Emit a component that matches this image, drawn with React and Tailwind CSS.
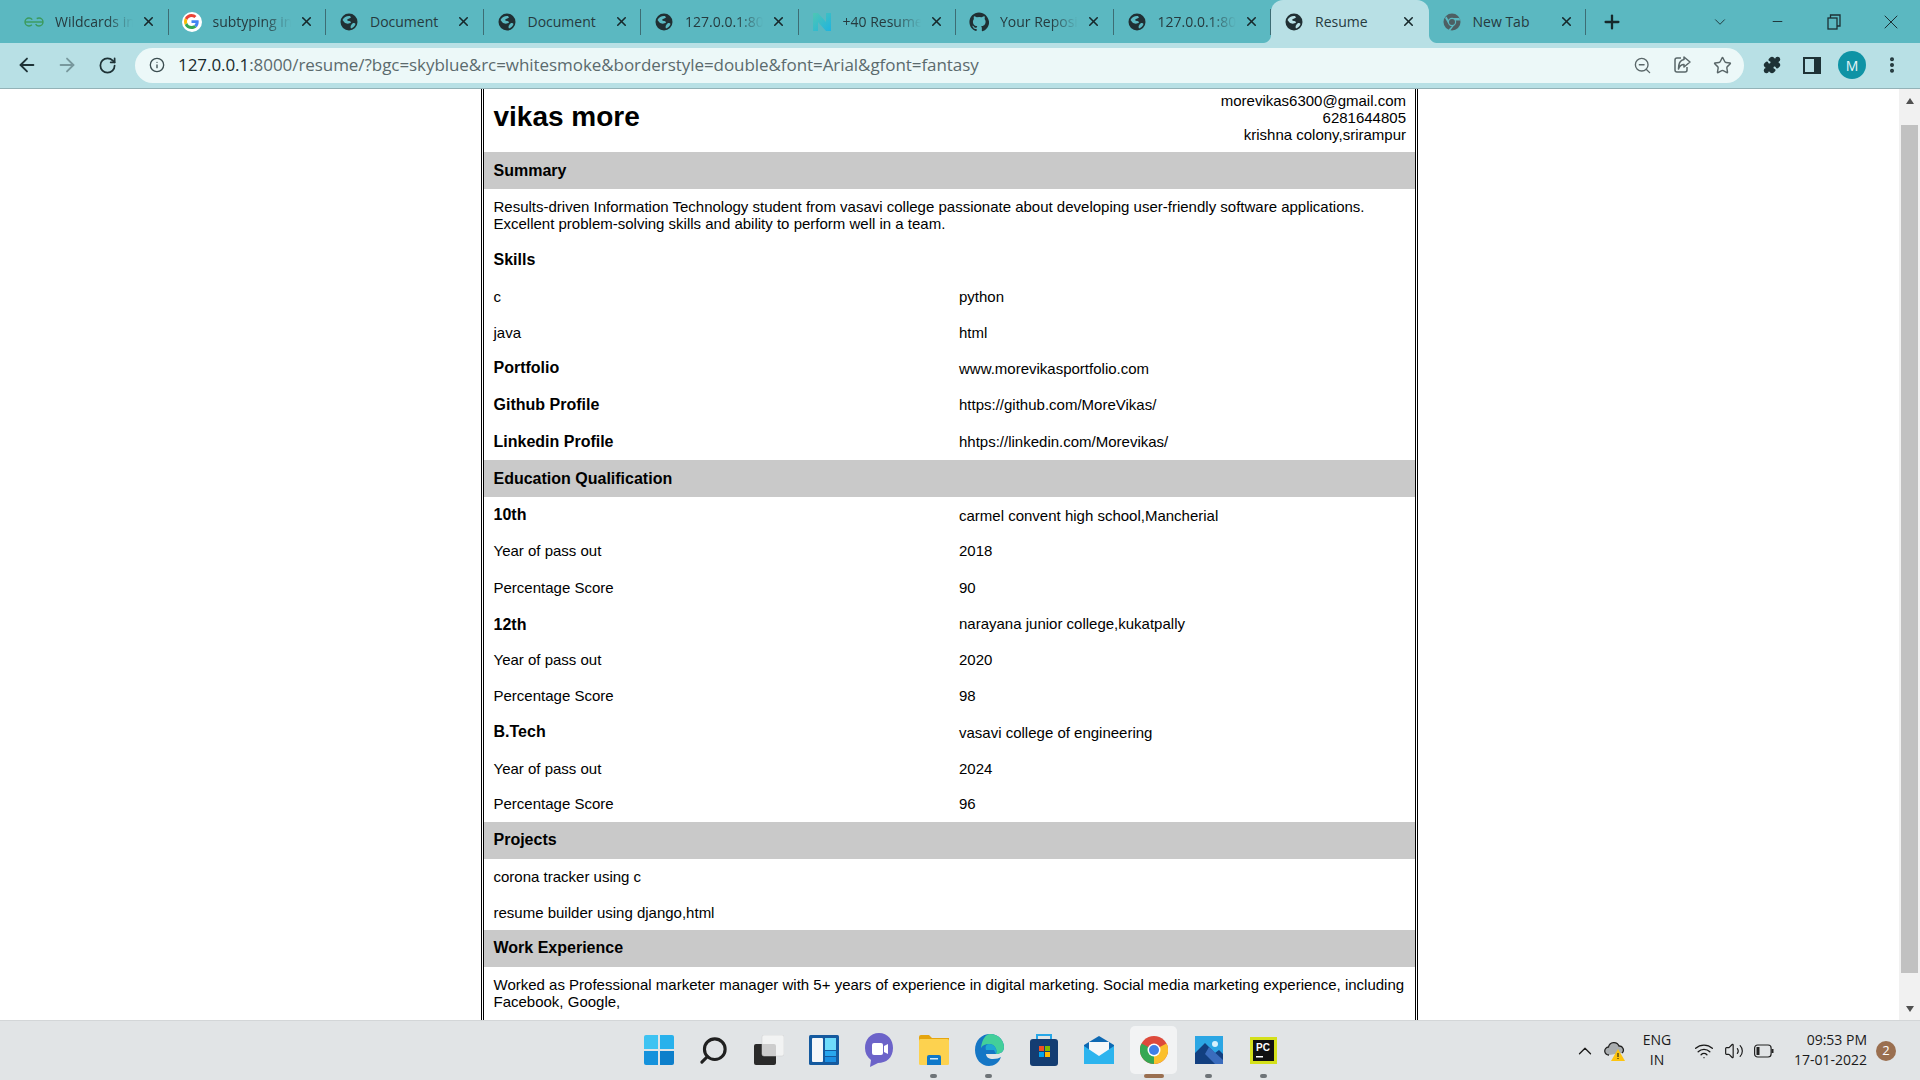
import React from 'react';
import { ArrowLeft, ArrowRight, RotateCw, Info, ZoomOut, Star, Puzzle, X, Plus, EllipsisVertical, ChevronDown, ChevronUp, Minus, Wifi, Volume2, Search } from 'lucide-react';

const GlobeIcon = ({ hole = '#5bb8c1' }) => (
  <svg width="18" height="18" viewBox="0 0 18 18" className="shrink-0">
    <circle cx="9" cy="9" r="8.500" fill="#202f33" />
    <path d="M2.500 7 C4 4 7 2.500 10 3 L11 4.500 C9.500 6 7.500 5.500 7 7 C8 8.500 11 7.500 11 9.500 C9.500 11 6 11 4.500 9.500 Z" fill={hole} />
    <path d="M13 10 C14.500 10 15.500 10.500 15.500 11 C14.800 13 13.200 14.800 11 15.500 C10 14 10.500 12 13 10 Z" fill={hole} />
  </svg>
);

const GoogleIcon = () => (
  <span className="w-[20px] h-[20px] rounded-full bg-white flex items-center justify-center shrink-0">
    <svg width="15" height="15" viewBox="0 0 48 48">
      <path fill="#EA4335" d="M24 9.500c3.500 0 6.700 1.300 9.100 3.500l6.800-6.800C35.800 2.400 30.300 0 24 0 14.600 0 6.500 5.400 2.600 13.200l7.900 6.100C12.400 13.700 17.700 9.500 24 9.500z" />
      <path fill="#4285F4" d="M47 24.500c0-1.600-.2-3.100-.4-4.500H24v9h13c-.6 3-2.300 5.500-4.800 7.200l7.700 6c4.500-4.200 7.100-10.300 7.100-17.700z" />
      <path fill="#FBBC05" d="M10.500 28.700c-.5-1.500-.8-3-.8-4.700s.3-3.200.8-4.700l-7.900-6.100C.9 16.500 0 20.100 0 24s.9 7.500 2.600 10.800l7.900-6.100z" />
      <path fill="#34A853" d="M24 48c6.500 0 11.900-2.100 15.900-5.800l-7.700-6c-2.200 1.400-4.900 2.300-8.200 2.300-6.300 0-11.600-4.200-13.500-9.800l-7.900 6.100C6.500 42.600 14.600 48 24 48z" />
    </svg>
  </span>
);

const GfgIcon = () => (
  <svg width="20" height="10" viewBox="0 0 20 10" className="shrink-0" fill="none" stroke="#3b9a5c" strokeWidth="1.400">
    <circle cx="5" cy="5" r="4" strokeDasharray="19 6" strokeDashoffset="-3" />
    <circle cx="15" cy="5" r="4" strokeDasharray="19 6" strokeDashoffset="9" />
    <path d="M1 5 H19" />
  </svg>
);

const NIcon = () => (
  <svg width="20" height="18" viewBox="0 0 20 18" className="shrink-0">
    <defs>
      <linearGradient id="n-grad" x1="0" y1="0" x2="1" y2="1">
        <stop offset="0" stopColor="#4fc6b4" />
        <stop offset="1" stopColor="#1eb4e0" />
      </linearGradient>
    </defs>
    <path d="M1 0 H6 L14 9 V0 H19 V18 H14 L6 9 V18 H1 Z" fill="url(#n-grad)" />
  </svg>
);

const GithubIcon = () => (
  <svg width="20" height="20" viewBox="0 0 24 24" fill="#202f33" className="shrink-0">
    <path d="M12 .5C5.600.5.500 5.600.500 12c0 5.100 3.300 9.400 7.900 10.900.6.100.8-.3.800-.6v-2c-3.200.7-3.900-1.400-3.900-1.400-.5-1.300-1.300-1.700-1.300-1.700-1-.7.100-.7.100-.7 1.200.1 1.800 1.200 1.800 1.200 1 1.800 2.700 1.300 3.400 1 .1-.8.4-1.300.7-1.600-2.600-.3-5.300-1.300-5.300-5.700 0-1.300.5-2.300 1.200-3.100-.1-.3-.5-1.500.1-3.200 0 0 1-.3 3.300 1.200a11.500 11.500 0 0 1 6 0c2.300-1.500 3.300-1.200 3.300-1.200.7 1.700.2 2.900.1 3.200.8.800 1.200 1.900 1.200 3.100 0 4.400-2.700 5.400-5.300 5.700.4.400.8 1.100.8 2.200v3.200c0 .3.200.7.800.6 4.600-1.500 7.900-5.800 7.900-10.900C23.500 5.600 18.400.5 12 .5z" />
  </svg>
);

const NewTabIcon = () => (
  <svg width="18" height="18" viewBox="0 0 18 18" className="shrink-0">
    <circle cx="9" cy="9" r="8.500" fill="#4d5f63" />
    <path d="M9 5 H16.500 A8.500 8.500 0 0 1 17 7.500 H12 Z M5.500 11 L2 5 A8.500 8.500 0 0 1 3.500 3.500 L6 8 Z M11 12.500 L7.500 17.300 A8.500 8.500 0 0 1 5.500 16.700 L9.500 12.500 Z" fill="#5bb8c1" />
    <circle cx="9" cy="9" r="4.200" fill="#5bb8c1" />
    <circle cx="9" cy="9" r="3" fill="#4d5f63" />
  </svg>
);

const tabs = [
  { title: 'Wildcards in', icon: <GfgIcon />, fade: true },
  { title: 'subtyping in', icon: <GoogleIcon />, fade: true },
  { title: 'Document', icon: <GlobeIcon /> },
  { title: 'Document', icon: <GlobeIcon /> },
  { title: '127.0.0.1:8000', icon: <GlobeIcon />, fade: true },
  { title: '+40 Resume', icon: <NIcon />, fade: true },
  { title: 'Your Reposit', icon: <GithubIcon />, fade: true },
  { title: '127.0.0.1:8000', icon: <GlobeIcon />, fade: true },
  { title: 'Resume', icon: <GlobeIcon hole="#b8e0e5" />, active: true, noSep: true },
  { title: 'New Tab', icon: <NewTabIcon /> },
];

const Tab = ({ tab }) => (
  <div className={`relative w-[157.500px] h-[43px] shrink-0 flex items-center ${tab.active ? 'bg-[#b8e0e5] rounded-t-[12px]' : ''}`}>
    {tab.active && <span className="absolute bottom-0 -left-[8px] w-[8px] h-[8px] [background:radial-gradient(circle_at_0_0,#5bb8c1_7.500px,#b8e0e5_8.500px)]" />}
    {tab.active && <span className="absolute bottom-0 -right-[8px] w-[8px] h-[8px] [background:radial-gradient(circle_at_100%_0,#5bb8c1_7.500px,#b8e0e5_8.500px)]" />}
    <span className="w-[46px] shrink-0 flex justify-center">{tab.icon}</span>
    <span className={`w-[78px] -ml-[2px] whitespace-nowrap overflow-hidden text-[14px] text-[#263a3e] -mt-[1px] ${tab.fade ? '[mask-image:linear-gradient(to_right,black_65%,transparent)]' : ''}`}>{tab.title}</span>
    <X size={15} strokeWidth={2.500} className="ml-[8px] text-[#17282b]" />
    {!tab.active && !tab.noSep && <span className="ml-auto w-px h-[26px] bg-[#3d6d74]" />}
  </div>
);

const TabStrip = () => (
  <div className="h-[43px] bg-[#5bb8c1] flex pl-[11px]">
    {tabs.map((tab, i) => <Tab key={i} tab={tab} />)}
    <span className="w-[51px] flex justify-center items-center"><Plus size={22} strokeWidth={2.500} className="text-[#17282b]" /></span>
    <span className="ml-[55px] w-[56px] flex justify-center items-center"><ChevronDown size={18} strokeWidth={1.200} className="text-[#1c3034]" /></span>
    <span className="ml-[1px] w-[56px] flex justify-center items-center"><Minus size={15} strokeWidth={1.500} className="text-[#1c3034]" /></span>
    <span className="w-[57px] flex justify-center items-center">
      <svg width="14" height="16" viewBox="0 0 14 16" fill="none" stroke="#1c3034" strokeWidth="1.300"><rect x="1" y="4" width="9" height="11" /><path d="M3.500 4 V1 H13 V12 H10" /></svg>
    </span>
    <span className="w-[58px] flex justify-center items-center"><X size={24} strokeWidth={1} className="text-[#1c3034]" /></span>
  </div>
);

const ToolbarBtn = ({ children, className = '' }) => (
  <span className={`flex justify-center items-center shrink-0 ${className}`}>{children}</span>
);

const Toolbar = () => (
  <div className="h-[46px] bg-[#b8e0e5] border-b border-[#93b2b7] flex items-center pb-[1px] pl-[7px]">
    <ToolbarBtn className="w-[40px]"><ArrowLeft size={22} strokeWidth={2} className="text-[#1e3236]" /></ToolbarBtn>
    <ToolbarBtn className="w-[40px]"><ArrowRight size={22} strokeWidth={2} className="text-[#78989d]" /></ToolbarBtn>
    <ToolbarBtn className="w-[40px]"><RotateCw size={19} strokeWidth={2.200} className="text-[#1e3236]" /></ToolbarBtn>
    <div className="ml-[8px] w-[1609px] h-[35px] rounded-full bg-[#ecf8f8] flex items-center">
      <ToolbarBtn className="w-[44px]"><Info size={16} strokeWidth={2} className="text-[#3b4d50]" /></ToolbarBtn>
      <span className="text-[17px] tracking-[-0.060px] -ml-[1px] whitespace-nowrap text-[#5b6a6d]"><span className="text-[#182a2d]">127.0.0.1</span>:8000/resume/?bgc=skyblue&rc=whitesmoke&borderstyle=double&font=Arial&gfont=fantasy</span>
      <ToolbarBtn className="ml-auto w-[40px]"><ZoomOut size={19} strokeWidth={1.700} className="text-[#5a6769]" /></ToolbarBtn>
      <ToolbarBtn className="w-[40px]">
        <svg width="20" height="20" viewBox="0 0 20 20" fill="none" stroke="#5a6769" strokeWidth="1.500" strokeLinejoin="round"><path d="M9 3 H5 Q3 3 3 5 V15 Q3 17 5 17 H13 Q15 17 15 15 V12" /><path d="M12 2 L18 7 L12 12 V9.500 C9.500 9.500 7.500 11 6.500 14 C6.500 9 8.500 5 12 4.500 Z" /></svg>
      </ToolbarBtn>
      <ToolbarBtn className="w-[40px] mr-[2px]"><Star size={19} strokeWidth={1.800} className="text-[#5a6769]" /></ToolbarBtn>
    </div>
    <ToolbarBtn className="ml-[8px] w-[40px]"><Puzzle size={18} fill="#1e3236" className="text-[#1e3236]" /></ToolbarBtn>
    <ToolbarBtn className="w-[40px]">
      <svg width="18" height="17" viewBox="0 0 18 17"><path d="M0 0 H18 V17 H0 Z M2 2 V15 H11 V2 Z" fill="#1e3236" fillRule="evenodd" /></svg>
    </ToolbarBtn>
    <ToolbarBtn className="w-[40px]"><span className="w-[28px] h-[28px] rounded-full bg-[#0f93a5] text-[#e8f6f8] text-[14px] flex items-center justify-center">M</span></ToolbarBtn>
    <ToolbarBtn className="w-[40px]"><EllipsisVertical size={20} strokeWidth={2.800} className="text-[#1e3236]" /></ToolbarBtn>
  </div>
);

const Band = ({ children, up }) => (
  <div className={`h-[37px] bg-[#c9c9c9] flex items-center pl-[9.500px] font-bold text-[16px] ${up ? 'pb-[2px]' : ''}`}>{children}</div>
);

const Row = ({ left, right, bold, tall, short, lift }) => (
  <div className={`${tall ? 'h-[37px]' : short ? 'h-[35px]' : 'h-[36px]'} grid grid-cols-[465.500px_1fr] items-center pl-[9.500px] ${lift ? 'pb-[2px]' : ''}`}>
    <span className={bold ? `font-bold text-[16px] ${tall ? '' : '-mt-[2px]'} ${lift ? 'mt-[2px]' : ''}` : ''}>{left}</span>
    <span>{right}</span>
  </div>
);

const Resume = () => (
  <div className="mx-auto w-[937px] h-full border-x-[3px] border-double border-black text-black text-[15px] leading-[17px] font-['Liberation_Sans',Arial,sans-serif] overflow-hidden">
    <div className="h-[63px] flex justify-between pl-[9.500px] pr-[9px] pt-[3px]">
      <h1 className="font-bold text-[28px] leading-[49px]">vikas more</h1>
      <div className="text-right">
        <div>morevikas6300@gmail.com</div>
        <div>6281644805</div>
        <div>krishna colony,srirampur</div>
      </div>
    </div>
    <Band>Summary</Band>
    <div className="pl-[9.500px] pr-[9px] pt-[9px] h-[52px]">
      Results-driven Information Technology student from vasavi college passionate about developing user-friendly software applications. Excellent problem-solving skills and ability to perform well in a team.
    </div>
    <Row left="Skills" bold tall />
    <Row left="c" right="python" />
    <Row left="java" right="html" />
    <Row left="Portfolio" right="www.morevikasportfolio.com" bold />
    <Row left="Github Profile" right="https://github.com/MoreVikas/" bold tall />
    <Row left="Linkedin Profile" right="hhtps://linkedin.com/Morevikas/" bold tall />
    <Band>Education Qualification</Band>
    <Row left="10th" right="carmel convent high school,Mancherial" bold />
    <Row left="Year of pass out" right="2018" tall lift />
    <Row left="Percentage Score" right="90" lift />
    <Row left="12th" right="narayana junior college,kukatpally" bold lift />
    <Row left="Year of pass out" right="2020" lift />
    <Row left="Percentage Score" right="98" lift />
    <Row left="B.Tech" right="vasavi college of engineering" bold />
    <Row left="Year of pass out" right="2024" />
    <Row left="Percentage Score" right="96" lift />
    <Band up>Projects</Band>
    <Row left="corona tracker using c" lift />
    <Row left="resume builder using django,html" short />
    <Band up>Work Experience</Band>
    <div className="pl-[9.500px] pr-[9px] pt-[9px]">
      Worked as Professional marketer manager with 5+ years of experience in digital marketing. Social media marketing experience, including Facebook, Google,
    </div>
  </div>
);

const Scrollbar = () => (
  <div className="w-[21px] shrink-0 bg-[#f1f1f1] flex flex-col items-center">
    <div className="h-[24px] mb-[12px] flex items-center justify-center"><span className="w-0 h-0 border-x-[4px] border-x-transparent border-b-[6px] border-b-[#505050]" /></div>
    <div className="w-[17px] flex-1 bg-[#c1c1c1]" />
    <div className="h-[47px] pt-[25px] flex items-center justify-center"><span className="w-0 h-0 border-x-[4px] border-x-transparent border-t-[6px] border-t-[#505050]" /></div>
  </div>
);

const TaskIcon = ({ children, dot, active }) => (
  <div className="relative w-[55px] h-[59px] flex items-center justify-center">
    {active && <span className="absolute top-[5px] left-[4px] w-[47px] h-[48px] rounded-[5px] bg-[#f2f3f4]" />}
    <span className="relative -mt-[1px]">{children}</span>
    {dot && <span className={`absolute bottom-[2px] h-[4px] rounded-full ${active ? 'w-[20px] bg-[#9a6f50]' : 'w-[7px] bg-[#6e7478]'}`} />}
  </div>
);

const Taskbar = () => (
  <div className="relative h-[60px] bg-[#e1e4e6] border-t border-[#d3d6d8] flex items-center text-[#1a1a1a] font-['Open_Sans',sans-serif]">
    <div className="ml-[631px] flex">
      <TaskIcon>
        <svg width="30" height="30" viewBox="0 0 30 30"><path d="M0 2 Q0 0 2 0 H14 V14 H0 Z" fill="#3ec3f2" /><path d="M16 0 H28 Q30 0 30 2 V14 H16 Z" fill="#28b1ec" /><path d="M0 16 H14 V30 H2 Q0 30 0 28 Z" fill="#1592dc" /><path d="M16 16 H30 V28 Q30 30 28 30 H16 Z" fill="#0d7fcb" /></svg>
      </TaskIcon>
      <TaskIcon><Search size={31} strokeWidth={2.400} className="text-[#202020] -scale-x-100" /></TaskIcon>
      <TaskIcon>
        <svg width="30" height="30" viewBox="0 0 30 30"><rect x="0" y="9" width="22" height="21" rx="2" fill="#2a2a2a" /><rect x="8" y="0" width="22" height="21" rx="2" fill="#f6f6f6" fillOpacity="0.800" stroke="#cfcfcf" strokeWidth="0.500" /></svg>
      </TaskIcon>
      <TaskIcon>
        <svg width="30" height="30" viewBox="0 0 30 30"><rect width="30" height="30" rx="1.500" fill="#155a9f" /><rect x="3" y="3" width="11" height="24" rx="1" fill="#f5f7f9" /><rect x="16" y="3" width="11" height="12" fill="#6fdcfb" /><rect x="16" y="16" width="11" height="5" fill="#29a7ee" /><rect x="16" y="22" width="11" height="5" fill="#1b8fe2" /></svg>
      </TaskIcon>
      <TaskIcon>
        <svg width="30" height="34" viewBox="0 0 30 34"><path d="M15 0 C24 0 29 7 29 15 C29 25 22 30 14 30 L6 34 L7 27 C3 24 1 20 1 15 C1 7 6 0 15 0 Z" fill="#6c63c9" /><rect x="8" y="10" width="11" height="12" rx="2" fill="#fff" /><path d="M20 13 L24 11 V21 L20 19 Z" fill="#fff" /></svg>
      </TaskIcon>
      <TaskIcon dot>
        <svg width="30" height="30" viewBox="0 0 30 30"><path d="M0 2 Q0 0 2 0 H10 L13 3 H30 V10 H0 Z" fill="#e5a50f" /><rect y="4" width="30" height="26" rx="1.500" fill="#fdd24f" /><path d="M8 22 Q8 20 10 20 H20 Q22 20 22 22 V30 H8 Z" fill="#0f78c9" /><rect x="11" y="23" width="8" height="1.500" fill="#cfe9fa" /></svg>
      </TaskIcon>
      <TaskIcon dot>
        <svg width="30" height="32" viewBox="0 0 30 32"><path d="M1 16 C1 6 8 0 16 0 C25 0 30 7 30 13 C30 18 26 20 22 20 L12 20 C12 23 15 25 19 25 C23 25 25 24 27 23 C25 29 20 32 15 32 C7 32 1 25 1 16 Z" fill="#1576c5" /><path d="M16 0 C25 0 30 7 30 13 C30 18 26 20 22 20 C24 15 20 10 15 10 C11 10 9 11 7 14 C8 5 12 0 16 0 Z" fill="#43cf9a" /><path d="M22 20 C24 15 20 10 15 10 C12 10 11 13 12 16 L20 16 Z" fill="#1fa7d3" /></svg>
      </TaskIcon>
      <TaskIcon>
        <svg width="30" height="32" viewBox="0 0 30 32"><path d="M8 6 V1 H22 V6" fill="none" stroke="#27a7e8" strokeWidth="2" /><rect x="1" y="5" width="28" height="27" rx="3" fill="#143d72" /><rect x="10" y="12" width="5" height="5" fill="#f25022" /><rect x="16" y="12" width="5" height="5" fill="#7fba00" /><rect x="10" y="18" width="5" height="5" fill="#00a4ef" /><rect x="16" y="18" width="5" height="5" fill="#ffb900" /></svg>
      </TaskIcon>
      <TaskIcon>
        <svg width="30" height="28" viewBox="0 0 30 28"><path d="M15 0 L30 9 V28 H0 V9 Z" fill="#0e69b3" /><rect x="5" y="6" width="20" height="14" fill="#f4f7f9" /><path d="M0 10 L15 20 L30 10 V28 H0 Z" fill="#2cb4ee" /></svg>
      </TaskIcon>
      <TaskIcon dot active>
        <svg width="28" height="28" viewBox="0 0 28 28"><circle cx="14" cy="14" r="14" fill="#dd4a3c" /><path d="M14 14 L26.500 7.500 A14 14 0 0 1 14 28 Z" fill="#fbc02d" /><path d="M14 14 L14 28 A14 14 0 0 1 1.500 7.500 Z" fill="#35a853" /><circle cx="14" cy="14" r="6.500" fill="#fff" /><circle cx="14" cy="14" r="5" fill="#3f7fe8" /></svg>
      </TaskIcon>
      <TaskIcon dot>
        <svg width="28" height="28" viewBox="0 0 28 28"><rect width="28" height="28" fill="#2ba6e4" /><circle cx="20" cy="8" r="3" fill="#d6f2fd" /><path d="M0 28 V17 L10 7 L20 17 L24 14 L28 18 V28 Z" fill="#123f80" /><path d="M14 11 L28 24 V28 H20 L10 18 Z" fill="#3a6cbd" /></svg>
      </TaskIcon>
      <TaskIcon dot>
        <svg width="27" height="27" viewBox="0 0 27 27"><rect width="27" height="27" fill="#d4e01b" /><rect x="3" y="3" width="21" height="21" fill="#111" /><rect x="6" y="19" width="7" height="1.500" fill="#fff" /><text x="6" y="14" fontSize="10" fontWeight="700" fill="#fff" fontFamily="Liberation Sans">PC</text></svg>
      </TaskIcon>
    </div>
    <div className="absolute right-0 top-0 h-[59px] flex items-center">
      <ChevronUp size={22} strokeWidth={1.400} className="mr-[8px]" />
      <svg width="22" height="22" viewBox="0 0 22 22" className="mr-[14px]"><path d="M5 15 A4 4 0 0 1 4.500 7 A5.500 5.500 0 0 1 15 6 A4 4 0 0 1 18 13" fill="#a9adb0" stroke="#222" strokeWidth="1.300" /><path d="M14 9 L21 21 H7 Z" fill="#fdc40f" /><rect x="13.500" y="13" width="1" height="4" fill="#111" /><rect x="13.500" y="18" width="1" height="1" fill="#111" /></svg>
      <div className="w-[34px] text-center text-[14px] leading-[20px] -mt-[1px]"><div>ENG</div><div>IN</div></div>
      <Wifi size={20} strokeWidth={1.600} className="ml-[20px]" />
      <Volume2 size={20} strokeWidth={1.400} className="ml-[10px]" />
      <svg width="20" height="14" viewBox="0 0 20 14" className="ml-[10px]" fill="none" stroke="#222" strokeWidth="1.200"><rect x="0.600" y="1" width="16.500" height="12" rx="3" /><rect x="2.500" y="3" width="3" height="8" fill="#222" stroke="none" /><path d="M18.500 5 V9" strokeWidth="2" /></svg>
      <div className="ml-[19px] w-[74px] text-right text-[14px] leading-[20px] whitespace-nowrap -mt-[2px]"><div>09:53 PM</div><div>17-01-2022</div></div>
      <span className="ml-[9px] mr-[24px] w-[20px] h-[20px] rounded-full bg-[#9a6f50] text-white text-[13px] flex items-center justify-center">2</span>
    </div>
  </div>
);

export default function App() {
  return (
    <div className="w-[1920px] h-[1080px] flex flex-col overflow-hidden bg-white font-['Open_Sans',sans-serif]">
      <TabStrip />
      <Toolbar />
      <div className="flex-1 flex min-h-0">
        <div className="flex-1 min-w-0"><Resume /></div>
        <Scrollbar />
      </div>
      <Taskbar />
    </div>
  );
}
